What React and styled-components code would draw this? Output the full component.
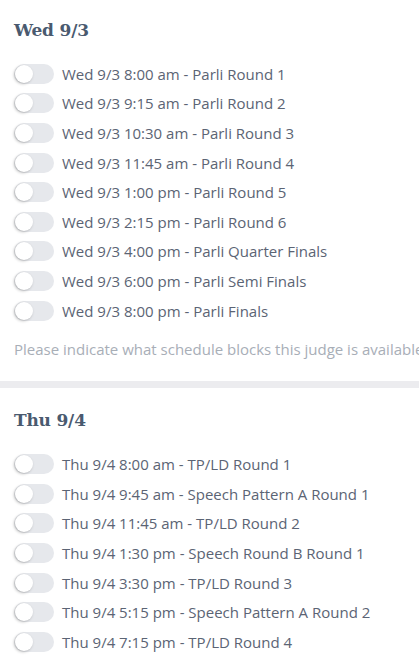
import React from 'react'
import styled, { createGlobalStyle } from 'styled-components'

const GlobalStyle = createGlobalStyle`
  html, body {
    margin: 0;
    padding: 0;
    background: #ffffff;
    overflow: hidden;
  }
  body {
    font-family: "Open Sans", "Liberation Sans", sans-serif;
  }
`

const Page = styled.div`
  width: 419px;
  overflow: hidden;
`

const Section = styled.section`
  padding: ${p => (p.first ? '18px' : '20px')} 14px 22px;
`

const Heading = styled.h3`
  margin: 0 0 17px;
  font-family: "DejaVu Serif", "Liberation Serif", serif;
  font-weight: bold;
  font-size: 17px;
  line-height: 24px;
  color: #4a5a6f;
  letter-spacing: -0.2px;
`

const List = styled.div`
  display: flex;
  flex-direction: column;
`

const Row = styled.label`
  display: flex;
  align-items: center;
  gap: 8px;
  height: 29.6px;
  cursor: pointer;
`

const Track = styled.span`
  position: relative;
  flex: none;
  width: 40px;
  height: 20px;
  border-radius: 10px;
  background: #e6e8ec;
`

const Knob = styled.span`
  position: absolute;
  left: 1px;
  top: 1px;
  width: 18px;
  height: 18px;
  border-radius: 50%;
  background: #ffffff;
  box-shadow: -1px 1px 3px rgba(0, 0, 0, 0.25);
`

const Label = styled.span`
  font-size: 15px;
  color: #5b6474;
  white-space: nowrap;
`

const Help = styled.p`
  margin: 14px 0 0;
  font-size: 15px;
  line-height: 20px;
  color: #a8aeb7;
  white-space: nowrap;
`

const Divider = styled.div`
  height: 7px;
  background: #ececef;
`

const wed = [
  'Wed 9/3 8:00 am - Parli Round 1',
  'Wed 9/3 9:15 am - Parli Round 2',
  'Wed 9/3 10:30 am - Parli Round 3',
  'Wed 9/3 11:45 am - Parli Round 4',
  'Wed 9/3 1:00 pm - Parli Round 5',
  'Wed 9/3 2:15 pm - Parli Round 6',
  'Wed 9/3 4:00 pm - Parli Quarter Finals',
  'Wed 9/3 6:00 pm - Parli Semi Finals',
  'Wed 9/3 8:00 pm - Parli Finals',
]

const thu = [
  'Thu 9/4 8:00 am - TP/LD Round 1',
  'Thu 9/4 9:45 am - Speech Pattern A Round 1',
  'Thu 9/4 11:45 am - TP/LD Round 2',
  'Thu 9/4 1:30 pm - Speech Round B Round 1',
  'Thu 9/4 3:30 pm - TP/LD Round 3',
  'Thu 9/4 5:15 pm - Speech Pattern A Round 2',
  'Thu 9/4 7:15 pm - TP/LD Round 4',
]

function Toggle() {
  return (
    <Track>
      <Knob />
    </Track>
  )
}

function Day({ title, items, help, first }) {
  return (
    <Section first={first}>
      <Heading>{title}</Heading>
      <List>
        {items.map(item => (
          <Row key={item}>
            <Toggle />
            <Label>{item}</Label>
          </Row>
        ))}
      </List>
      {help && <Help>Please indicate what schedule blocks this judge is available</Help>}
    </Section>
  )
}

export default function App() {
  return (
    <Page>
      <GlobalStyle />
      <Day title="Wed 9/3" items={wed} help first />
      <Divider />
      <Day title="Thu 9/4" items={thu} />
    </Page>
  )
}
